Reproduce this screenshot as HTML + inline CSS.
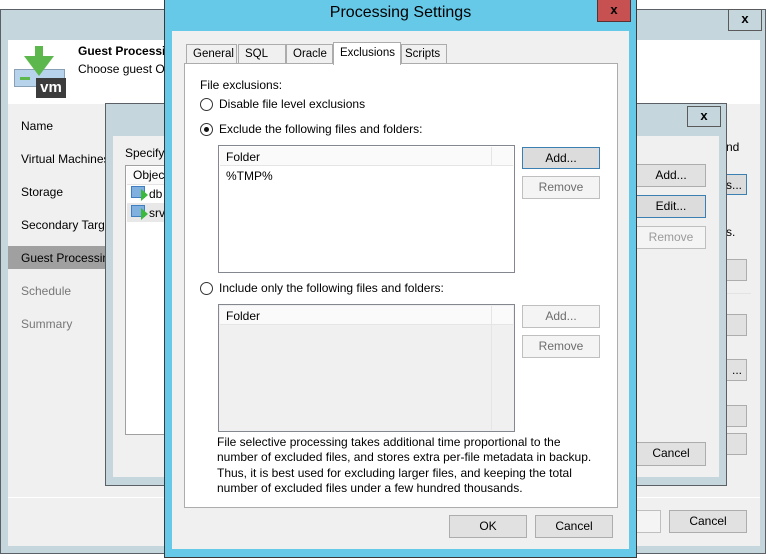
<!DOCTYPE html>
<html><head><meta charset="utf-8"><style>
*{box-sizing:border-box;margin:0;padding:0}
body{width:768px;height:559px;background:#fff;position:relative;overflow:hidden;font-family:"Liberation Sans",sans-serif;font-size:12px;color:#000}
.a{position:absolute}
.btn{position:absolute;background:#e1e1e1;border:1px solid #adadad;text-align:center;line-height:20px;font-size:12px}
.btn.f{border-color:#3c7fb1;background:#dcdcdc}
.btn.d{background:#f4f4f4;border-color:#bfbfbf;color:#9a9a9a}
.x{position:absolute;border:1px solid #5a5a5a;background:#c5d7dd;text-align:center;font-weight:bold;font-size:13px;line-height:17px}
.radio{position:absolute;width:13px;height:13px;border:1px solid #333;border-radius:50%;background:#fff}
.tab{position:absolute;top:44px;height:19px;border:1px solid #acacac;border-bottom:none;background:#f0f0f0;padding-left:6px;line-height:18px;font-size:11.5px}
</style></head><body>
<div class="a" style="left:0;top:9px;width:766px;height:545px;background:#c5d7dd;border:1px solid #5b6066"></div>
<div class="x" style="left:728px;top:9px;width:34px;height:22px">x</div>
<div class="a" style="left:8px;top:40px;width:752px;height:64px;background:#fff"></div>
<div class="a" style="left:8px;top:104px;width:752px;height:442px;background:#f0f0f0"></div>
<div class="a" style="left:8px;top:497px;width:752px;height:1px;background:#fff"></div>
<div class="a" style="left:14px;top:69px;width:51px;height:18px;background:#b7d3ec;border:1px solid #8aa0b4"></div>
<div class="a" style="left:20px;top:77px;width:10px;height:3px;background:#5cb84c"></div>
<div class="a" style="left:35px;top:46px;width:8px;height:14px;background:#5cb84c"></div>
<div class="a" style="left:24px;top:56px;width:0;height:0;border-left:15px solid transparent;border-right:15px solid transparent;border-top:20px solid #5cb84c"></div>
<div class="a" style="left:36px;top:78px;width:30px;height:20px;background:#3c3c3c;color:#fff;font-weight:bold;font-size:15px;line-height:19px;text-align:center">vm</div>
<div class="a" style="left:78px;top:44px;font-weight:bold;font-size:12px">Guest Processing</div>
<div class="a" style="left:78px;top:62px;font-size:12px">Choose guest OS</div>
<div class="a" style="left:21px;top:119px">Name</div>
<div class="a" style="left:21px;top:152px">Virtual Machines</div>
<div class="a" style="left:21px;top:185px">Storage</div>
<div class="a" style="left:21px;top:218px">Secondary Target</div>
<div class="a" style="left:8px;top:246px;width:100px;height:23px;background:#a0a0a0"></div>
<div class="a" style="left:21px;top:251px">Guest Processing</div>
<div class="a" style="left:21px;top:284px;color:#777">Schedule</div>
<div class="a" style="left:21px;top:317px;color:#777">Summary</div>
<div class="a" style="left:726px;top:140px">nd</div>
<div class="btn f" style="left:700px;top:174px;width:47px;height:21px;text-align:right;padding-right:4px">s...</div>
<div class="a" style="left:726px;top:225px">s.</div>
<div class="btn" style="left:700px;top:259px;width:47px;height:22px"></div>
<div class="a" style="left:636px;top:293px;width:115px;height:1px;background:#e3e3e3"></div>
<div class="btn" style="left:700px;top:314px;width:47px;height:22px"></div>
<div class="btn" style="left:700px;top:359px;width:47px;height:22px;text-align:right;padding-right:4px">...</div>
<div class="btn" style="left:700px;top:405px;width:47px;height:22px"></div>
<div class="btn" style="left:700px;top:433px;width:47px;height:22px"></div>
<div class="btn d" style="left:600px;top:510px;width:61px;height:23px"></div>
<div class="btn" style="left:669px;top:510px;width:78px;height:23px">Cancel</div>
<div class="a" style="left:105px;top:103px;width:622px;height:383px;background:#c5d7dd;border:1px solid #5b6066"></div>
<div class="x" style="left:687px;top:106px;width:34px;height:21px">x</div>
<div class="a" style="left:113px;top:136px;width:606px;height:341px;background:#f0f0f0"></div>
<div class="a" style="left:125px;top:146px">Specify</div>
<div class="a" style="left:125px;top:165px;width:60px;height:270px;background:#fff;border:1px solid #a0a0a0"></div>
<div class="a" style="left:127px;top:167px;width:50px;height:18px;background:#fafafa;border-bottom:1px solid #e3e3e3"></div>
<div class="a" style="left:133px;top:168px">Object</div>
<div class="a" style="left:127px;top:203px;width:50px;height:19px;background:#e8e8e8"></div>
<div class="a" style="left:131px;top:186px;width:14px;height:12px;background:#7fb0df;border:1px solid #3f7fbf"></div>
<div class="a" style="left:141px;top:189px;border-left:7px solid #3cb93c;border-top:6px solid transparent;border-bottom:6px solid transparent"></div>
<div class="a" style="left:149px;top:187px">db</div>
<div class="a" style="left:131px;top:205px;width:14px;height:12px;background:#7fb0df;border:1px solid #3f7fbf"></div>
<div class="a" style="left:141px;top:208px;border-left:7px solid #3cb93c;border-top:6px solid transparent;border-bottom:6px solid transparent"></div>
<div class="a" style="left:149px;top:206px">srv</div>
<div class="btn" style="left:636px;top:164px;width:70px;height:23px">Add...</div>
<div class="btn f" style="left:636px;top:195px;width:70px;height:23px">Edit...</div>
<div class="btn d" style="left:636px;top:226px;width:70px;height:23px">Remove</div>
<div class="btn" style="left:636px;top:442px;width:70px;height:24px">Cancel</div>
<div class="a" style="left:164px;top:0;width:473px;height:558px;background:#66c9e8;border:1px solid #3a3a3a;border-top:none"></div>
<div class="a" style="left:164px;top:4px;width:473px;text-align:center;font-size:16px;color:#000">Processing Settings</div>
<div class="a" style="left:597px;top:0;width:34px;height:22px;background:#c75050;border:1px solid #5a3030;border-top:none;text-align:center;font-weight:bold;font-size:13px;line-height:19px;color:#000">x</div>
<div class="a" style="left:172px;top:31px;width:457px;height:518px;background:#f0f0f0"></div>
<div class="a" style="left:184px;top:63px;width:434px;height:445px;background:#fff;border:1px solid #acacac"></div>
<div class="tab" style="left:186px;width:51px">General</div>
<div class="tab" style="left:238px;width:48px">SQL</div>
<div class="tab" style="left:286px;width:47px">Oracle</div>
<div class="tab" style="left:333px;top:42px;height:23px;width:68px;background:#fff;padding-left:6px;line-height:20px">Exclusions</div>
<div class="tab" style="left:401px;width:46px;padding-left:3px">Scripts</div>
<div class="a" style="left:200px;top:78px">File exclusions:</div>
<div class="radio" style="left:200px;top:98px"></div>
<div class="a" style="left:219px;top:97px">Disable file level exclusions</div>
<div class="radio" style="left:200px;top:123px"></div>
<div class="a" style="left:204px;top:127px;width:5px;height:5px;border-radius:50%;background:#111"></div>
<div class="a" style="left:219px;top:122px">Exclude the following files and folders:</div>
<div class="a" style="left:218px;top:145px;width:297px;height:128px;background:#fff;border:1px solid #828790"></div>
<div class="a" style="left:220px;top:147px;width:293px;height:19px;background:#fafafa;border-bottom:1px solid #e5e5e5"></div>
<div class="a" style="left:491px;top:147px;width:1px;height:19px;background:#e5e5e5"></div>
<div class="a" style="left:226px;top:150px">Folder</div>
<div class="a" style="left:226px;top:169px">%TMP%</div>
<div class="btn f" style="left:522px;top:147px;width:78px;height:22px">Add...</div>
<div class="btn d" style="left:522px;top:176px;width:78px;height:23px;color:#6d6d6d">Remove</div>
<div class="radio" style="left:200px;top:282px"></div>
<div class="a" style="left:219px;top:281px">Include only the following files and folders:</div>
<div class="a" style="left:218px;top:304px;width:297px;height:128px;background:#f0f0f0;border:1px solid #828790"></div>
<div class="a" style="left:220px;top:306px;width:293px;height:19px;background:#fafafa;border-bottom:1px solid #e5e5e5"></div>
<div class="a" style="left:491px;top:306px;width:1px;height:124px;background:#e5e5e5"></div>
<div class="a" style="left:226px;top:309px">Folder</div>
<div class="btn d" style="left:522px;top:305px;width:78px;height:23px;color:#6d6d6d">Add...</div>
<div class="btn d" style="left:522px;top:335px;width:78px;height:23px;color:#6d6d6d">Remove</div>
<div class="a" style="left:217px;top:435px;line-height:15.3px;width:400px">File selective processing takes additional time proportional to the<br>number of excluded files, and stores extra per-file metadata in backup.<br>Thus, it is best used for excluding larger files, and keeping the total<br>number of excluded files under a few hundred thousands.</div>
<div class="btn" style="left:449px;top:515px;width:78px;height:23px">OK</div>
<div class="btn" style="left:535px;top:515px;width:78px;height:23px">Cancel</div>
</body></html>
